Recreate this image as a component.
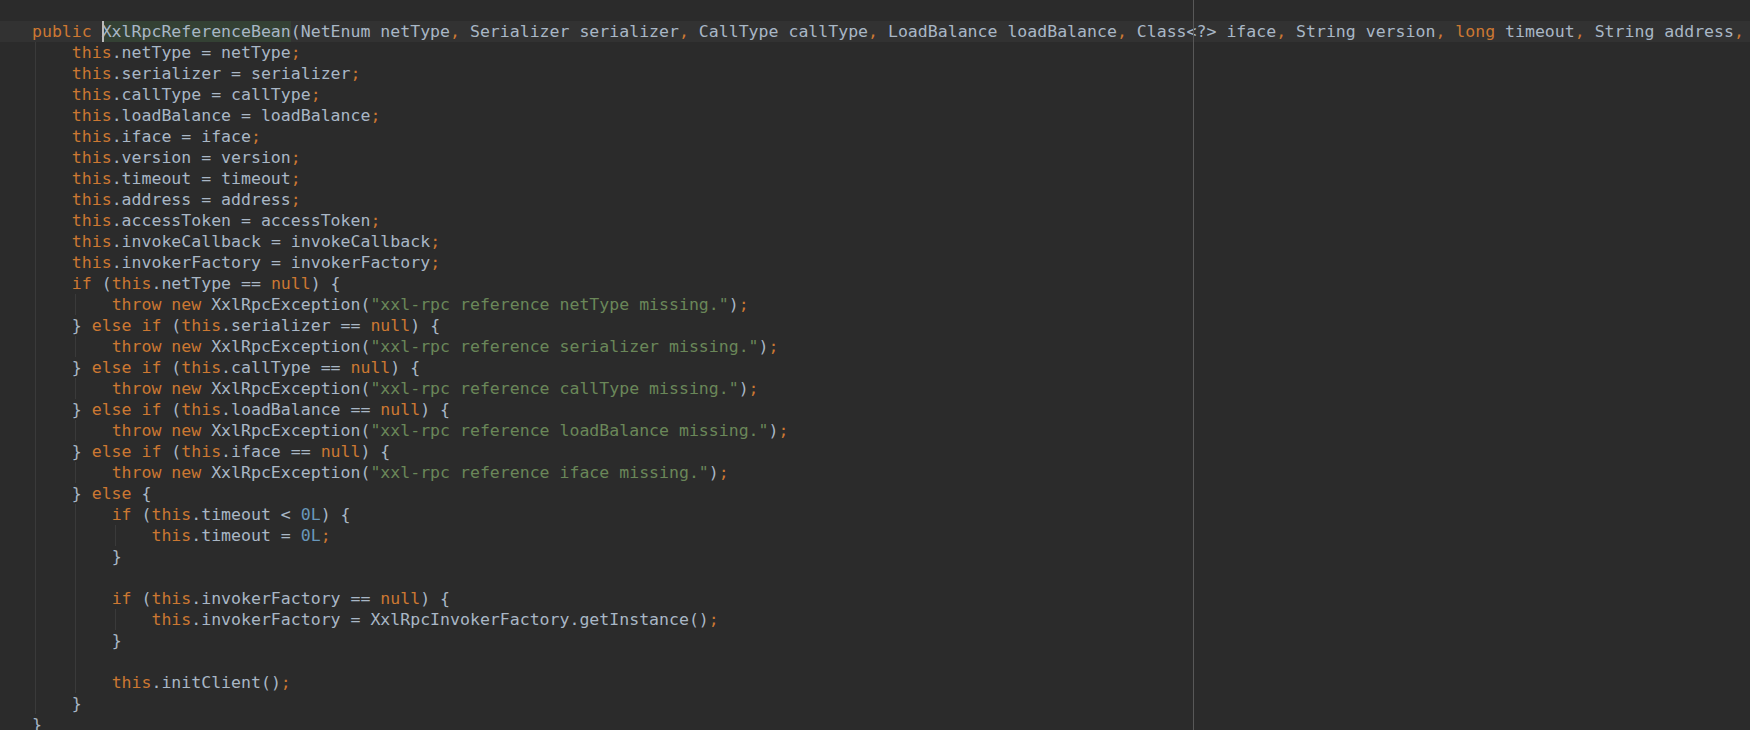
const KEYWORDS = new Set(["public", "this", "if", "else", "throw", "new", "null", "long"]);

const LINES: string[] = [
  "public XxlRpcReferenceBean(NetEnum netType, Serializer serializer, CallType callType, LoadBalance loadBalance, Class<?> iface, String version, long timeout, String address,",
  "    this.netType = netType;",
  "    this.serializer = serializer;",
  "    this.callType = callType;",
  "    this.loadBalance = loadBalance;",
  "    this.iface = iface;",
  "    this.version = version;",
  "    this.timeout = timeout;",
  "    this.address = address;",
  "    this.accessToken = accessToken;",
  "    this.invokeCallback = invokeCallback;",
  "    this.invokerFactory = invokerFactory;",
  "    if (this.netType == null) {",
  '        throw new XxlRpcException("xxl-rpc reference netType missing.");',
  "    } else if (this.serializer == null) {",
  '        throw new XxlRpcException("xxl-rpc reference serializer missing.");',
  "    } else if (this.callType == null) {",
  '        throw new XxlRpcException("xxl-rpc reference callType missing.");',
  "    } else if (this.loadBalance == null) {",
  '        throw new XxlRpcException("xxl-rpc reference loadBalance missing.");',
  "    } else if (this.iface == null) {",
  '        throw new XxlRpcException("xxl-rpc reference iface missing.");',
  "    } else {",
  "        if (this.timeout < 0L) {",
  "            this.timeout = 0L;",
  "        }",
  "",
  "        if (this.invokerFactory == null) {",
  "            this.invokerFactory = XxlRpcInvokerFactory.getInstance();",
  "        }",
  "",
  "        this.initClient();",
  "    }",
  "}",
];

// indent guide levels per line
function guidesFor(i: number): number[] {
  const g: number[] = [];
  if (i >= 1 && i <= 32) g.push(0);
  if ([13, 15, 17, 19, 21].includes(i) || (i >= 23 && i <= 31)) g.push(1);
  if (i === 24 || i === 28) g.push(2);
  return g;
}

const GUIDE_POS = ["left-[35px]", "left-[75px]", "left-[115px]"];

function Tokens({ text }: { text: string }) {
  const parts = text.match(/"[^"]*"|[A-Za-z_][A-Za-z0-9_]*|\d+L?|\s+|./g) || [];
  return (
    <>
      {parts.map((p, k) => {
        if (p.startsWith('"')) return <span key={k} className="text-[#6a8759]">{p}</span>;
        if (KEYWORDS.has(p) || p === "," || p === ";") return <span key={k} className="text-[#cc7832]">{p}</span>;
        if (/^\d/.test(p)) return <span key={k} className="text-[#6897bb]">{p}</span>;
        return <span key={k}>{p}</span>;
      })}
    </>
  );
}

function FirstLine() {
  const rest = LINES[0].slice("public XxlRpcReferenceBean".length);
  return (
    <>
      <span className="text-[#cc7832]">public </span>
      <span className="relative inline-block bg-[#344134]">
        XxlRpcReferenceBean
        <span className="absolute left-0 top-0 h-[21px] w-[2px] bg-[#bbbbbb]" />
      </span>
      <Tokens text={rest} />
    </>
  );
}

export default function App() {
  return (
    <div className="relative h-[730px] w-full overflow-hidden bg-[#2b2b2b] font-['DejaVu_Sans_Mono',monospace] text-[16.55px] leading-[21px] text-[#a9b7c6]">
      <div className="pt-[21px]">
        {LINES.map((line, i) => (
          <div
            key={i}
            className={
              "relative h-[21px] whitespace-pre pl-[32px] " + (i === 0 ? "bg-[#323232]" : "")
            }
          >
            {guidesFor(i).map((lvl) => (
              <span key={lvl} className={"absolute top-0 bottom-0 w-px bg-[#3a3a3a] " + GUIDE_POS[lvl]} />
            ))}
            {i === 0 ? <FirstLine /> : <Tokens text={line} />}
          </div>
        ))}
      </div>
      <div className="absolute top-0 bottom-0 left-[1193px] w-px bg-[#585858]" />
    </div>
  );
}
